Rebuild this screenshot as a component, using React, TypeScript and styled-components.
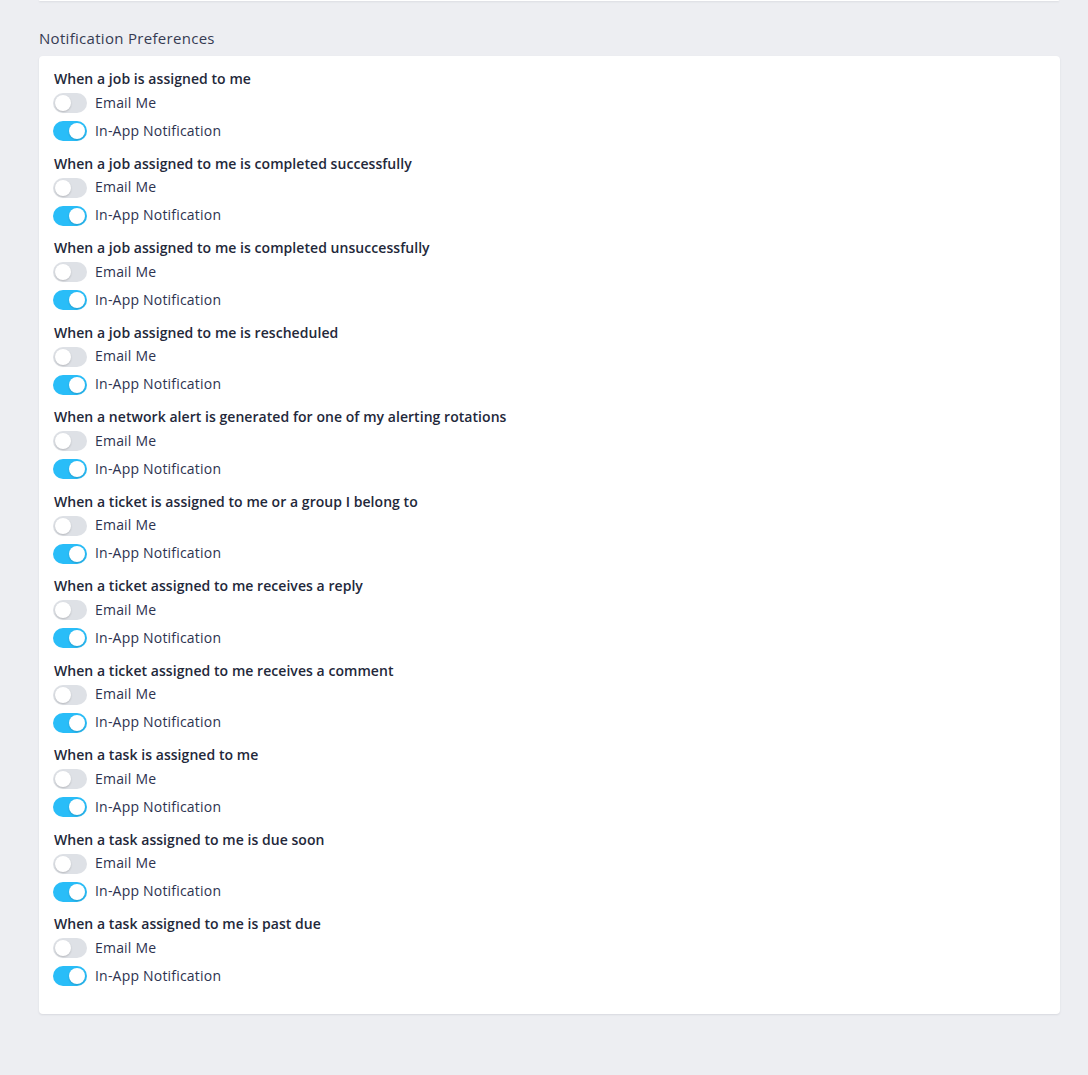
import styled, { createGlobalStyle } from 'styled-components'

const GlobalStyle = createGlobalStyle`
  html, body {
    margin: 0;
    padding: 0;
    background: #edeef2;
  }
  body {
    font-family: "Open Sans", Lato, "Noto Sans", sans-serif;
    -webkit-font-smoothing: antialiased;
  }
`

const Page = styled.div`
  padding: 0 28px 40px 39px;
  min-height: 1075px;
  box-sizing: border-box;
`

const TopCard = styled.div`
  height: 1px;
  background: #fff;
  border-radius: 0 0 4px 4px;
  box-shadow: 0 1px 2px rgba(30, 40, 60, 0.12);
  margin-right: 1px;
`

const Heading = styled.h2`
  margin: 27px 0 0;
  font-size: 15px;
  line-height: 20px;
  font-weight: 400;
  letter-spacing: 0.3px;
  color: #363b52;
`

const Panel = styled.section`
  margin-top: 8px;
  background: #fff;
  border-radius: 4px;
  box-shadow: 0 1px 2px rgba(30, 40, 60, 0.1);
  padding: 13px 14px 28px;
  display: flex;
  flex-direction: column;
  gap: 12.5px;
`

const Group = styled.div`
  display: flex;
  flex-direction: column;
`

const GroupTitle = styled.div`
  font-size: 14px;
  line-height: 20px;
  font-weight: 600;
  letter-spacing: 0.05px;
  color: #23283a;
  margin-bottom: 4px;
  padding-left: 1px;
`

const Options = styled.div`
  display: flex;
  flex-direction: column;
  gap: 8px;
`

const Row = styled.label`
  display: flex;
  align-items: center;
  gap: 8px;
  height: 20px;
  font-size: 14px;
  letter-spacing: 0.2px;
  line-height: 18px;
  color: #2d3350;
  cursor: pointer;
`

const Track = styled.span<{ $on: boolean }>`
  position: relative;
  width: 34px;
  height: 20px;
  border-radius: 10px;
  flex-shrink: 0;
  background: ${(p) => (p.$on ? '#29bdf8' : '#dee1e6')};
`

const Thumb = styled.span<{ $on: boolean }>`
  position: absolute;
  top: 2px;
  left: ${(p) => (p.$on ? '16px' : '2px')};
  width: 16px;
  height: 16px;
  border-radius: 50%;
  background: #fff;
  box-shadow: 0 1px 2px rgba(0, 0, 0, 0.18);
`

const Text = styled.span`
  margin-top: -1px;
`

const Toggle = ({ on, label }: { on: boolean; label: string }) => (
  <Row>
    <Track $on={on}>
      <Thumb $on={on} />
    </Track>
    <Text>{label}</Text>
  </Row>
)

const events = [
  'When a job is assigned to me',
  'When a job assigned to me is completed successfully',
  'When a job assigned to me is completed unsuccessfully',
  'When a job assigned to me is rescheduled',
  'When a network alert is generated for one of my alerting rotations',
  'When a ticket is assigned to me or a group I belong to',
  'When a ticket assigned to me receives a reply',
  'When a ticket assigned to me receives a comment',
  'When a task is assigned to me',
  'When a task assigned to me is due soon',
  'When a task assigned to me is past due',
]

export default function App() {
  return (
    <>
      <GlobalStyle />
      <Page>
        <TopCard />
        <Heading>Notification Preferences</Heading>
        <Panel>
          {events.map((e) => (
            <Group key={e}>
              <GroupTitle>{e}</GroupTitle>
              <Options>
                <Toggle on={false} label="Email Me" />
                <Toggle on label="In-App Notification" />
              </Options>
            </Group>
          ))}
        </Panel>
      </Page>
    </>
  )
}
